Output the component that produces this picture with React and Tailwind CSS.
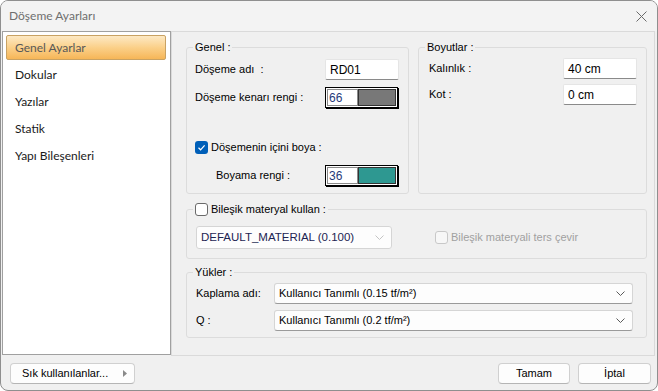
import React from 'react';

const listItems = ['Genel Ayarlar', 'Dokular', 'Yazılar', 'Statik', 'Yapı Bileşenleri'];

const Group = ({ label, className, children }) => (
  <div className={`relative border border-[#dcdcdc] rounded-[3px] ${className}`}>
    <div className="absolute -top-[7px] left-[6px] px-[2px] bg-[#f0f0f0] leading-[13px] flex items-center">
      {label}
    </div>
    {children}
  </div>
);

const TextBox = ({ value }) => (
  <div className="w-[74px] h-[21px] bg-white border border-[#e5e5e5] border-b-[#8a8a8a] rounded-[2px] flex items-center pl-[4px] text-[12px]">
    {value}
  </div>
);

const ColorBox = ({ value, swatch }) => (
  <div className="w-[73px] h-[21px] border border-black shadow-[1px_1px_0_#000] p-[1px] bg-white flex">
    <div className="w-[31px] h-full border border-[#8a8a8a] bg-white flex items-center pl-[1px] text-[12px] text-[#1f3a7a]">
      {value}
    </div>
    <div className={`flex-1 h-full border border-[#333] ${swatch}`} />
  </div>
);

const Chevron = ({ color = '#555' }) => (
  <svg width="9" height="5" viewBox="0 0 9 5" fill="none">
    <path d="M0.5 0.5 L4.5 4.5 L8.5 0.5" stroke={color} strokeWidth="1" />
  </svg>
);

const Combo = ({ value, className, muted }) => (
  <div
    className={`bg-[#fdfdfd] border border-[#d5d5d5] border-b-[#9a9a9a] rounded-[3px] flex items-center justify-between pl-[4px] pr-[7px] ${className}`}
  >
    <span>{value}</span>
    <Chevron color={muted ? '#c4c4c4' : '#5a5a5a'} />
  </div>
);

const Button = ({ children, className }) => (
  <button className={`h-[21px] bg-[#fdfdfd] border border-[#d0d0d0] border-b-[#b5b5b5] rounded-[4px] flex items-center ${className}`}>
    {children}
  </button>
);

export default function App() {
  return (
    <div className="w-[658px] h-[391px] border border-[#8f8f8f] rounded-[8px] overflow-hidden bg-[#f0f0f0] flex flex-col font-['Liberation_Sans',Arial,sans-serif] text-[11px] text-black">
      {/* Title bar */}
      <div className="h-[30px] bg-[#f3f3f3] flex items-center justify-between pl-[8px] pr-[10px] shrink-0">
        <span className="font-[Lato,sans-serif] text-[12px] text-[#6f6f6f]">Döşeme Ayarları</span>
        <svg width="11" height="11" viewBox="0 0 11 11">
          <path d="M0.5 0.5 L10.5 10.5 M10.5 0.5 L0.5 10.5" stroke="#6a6a6a" strokeWidth="1" />
        </svg>
      </div>

      <div className="h-[325px] flex pl-[1px] shrink-0">
        {/* Left list */}
        <div className="w-[169px] h-[324px] border border-[#a0a0a0] bg-white pt-[2px] pl-[3px] pr-[4px] font-[Lato,sans-serif] text-[12px]">
          {listItems.map((item, i) => (
            <div key={item} className="h-[27px] py-[1px]">
              {i === 0 ? (
                <div className="h-[25px] border border-[#c9a263] rounded-[2px] bg-gradient-to-b from-[#fde9c4] via-[#fbd089] to-[#f6b657] flex items-center pl-[8px] text-[#585858]">
                  {item}
                </div>
              ) : (
                <div className="h-[25px] flex items-center pl-[9px] text-[#1a1a1a]">{item}</div>
              )}
            </div>
          ))}
        </div>

        {/* Right panel */}
        <div className="w-[484px] h-[325px] border border-[#dadada] pl-[14px] pt-[15px] flex flex-col">
          <div className="flex gap-[9px]">
            <Group label="Genel :" className="w-[223px] h-[147px] pt-[11px] pl-[8px]">
              <div className="flex items-center h-[21px]">
                <span className="w-[130px]">Döşeme adı&nbsp; :</span>
                <TextBox value="RD01" />
              </div>
              <div className="flex items-center h-[21px] mt-[7px]">
                <span className="w-[130px]">Döşeme kenarı rengi :</span>
                <ColorBox value="66" swatch="bg-[#787878]" />
              </div>
              <div className="flex items-center h-[13px] mt-[33px]">
                <span className="w-[13px] h-[13px] rounded-[3px] bg-[#005fb8] flex items-center justify-center">
                  <svg width="9" height="9" viewBox="0 0 9 9" fill="none">
                    <path d="M1.5 4.8 L3.6 6.8 L7.6 2.4" stroke="white" strokeWidth="1.2" />
                  </svg>
                </span>
                <span className="ml-[3px]">Döşemenin içini boya :</span>
              </div>
              <div className="flex items-center h-[21px] mt-[11px]">
                <span className="ml-[21px] w-[109px]">Boyama rengi :</span>
                <ColorBox value="36" swatch="bg-[#2e9891]" />
              </div>
            </Group>

            <Group label="Boyutlar :" className="w-[229px] h-[147px] pt-[10px] pl-[10px]">
              <div className="flex items-center h-[21px]">
                <span className="w-[134px]">Kalınlık :</span>
                <TextBox value="40 cm" />
              </div>
              <div className="flex items-center h-[21px] mt-[5px]">
                <span className="w-[134px]">Kot :</span>
                <TextBox value="0 cm" />
              </div>
            </Group>
          </div>

          <Group
            label={
              <>
                <span className="w-[13px] h-[13px] rounded-[3px] border border-[#6a6a6a] bg-white" />
                <span className="ml-[3px]">Bileşik materyal kullan :</span>
              </>
            }
            className="w-[461px] h-[50px] mt-[15px] pt-[16px] pl-[9px]"
          >
            <div className="flex items-center">
              <Combo
                value="DEFAULT_MATERIAL (0.100)"
                muted
                className="w-[196px] h-[23px] text-[11.5px] text-[#1c2452] border-b-[#d5d5d5]"
              />
              <span className="ml-[43px] w-[13px] h-[13px] rounded-[3px] border border-[#c8c8c8] bg-[#f7f7f7]" />
              <span className="ml-[3px] text-[#a0a0a0]">Bileşik materyali ters çevir</span>
            </div>
          </Group>

          <Group label="Yükler :" className="w-[461px] h-[66px] mt-[13px] pt-[10px] pl-[9px]">
            <div className="flex items-center">
              <span className="w-[78px]">Kaplama adı:</span>
              <Combo value="Kullanıcı Tanımlı (0.15 tf/m²)" className="w-[359px] h-[21px]" />
            </div>
            <div className="flex items-center mt-[6px]">
              <span className="w-[78px]">Q :</span>
              <Combo value="Kullanıcı Tanımlı (0.2 tf/m²)" className="w-[359px] h-[21px]" />
            </div>
          </Group>
        </div>
      </div>

      {/* Bottom bar */}
      <div className="flex-1 flex items-start justify-between pt-[7px] pl-[9px] pr-[6px]">
        <Button className="w-[125px] pl-[11px] pr-[7px] justify-between">
          <span>Sık kullanılanlar...</span>
          <svg width="4" height="7" viewBox="0 0 4 7">
            <path d="M0 0 L4 3.5 L0 7 Z" fill="#8a8a8a" />
          </svg>
        </Button>
        <div className="flex gap-[8px]">
          <Button className="w-[72px] justify-center">Tamam</Button>
          <Button className="w-[73px] justify-center">İptal</Button>
        </div>
      </div>
    </div>
  );
}
